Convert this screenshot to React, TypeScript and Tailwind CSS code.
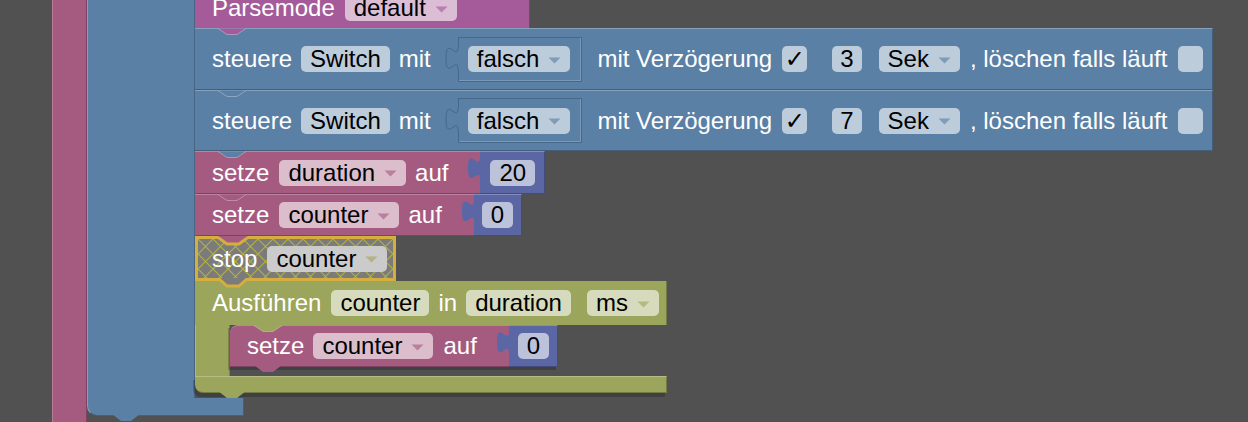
import React from "react";

const BLUE = "#5b80a5";
const PINK = "#a55b80";
const PURPLE = "#a55b99";
const NUM = "#5b67a5";
const GREEN = "#9ba55b";
const OLIVE = "#a5a55b";

function Tri({ color }: { color: string }) {
  return (
    <svg width="13" height="7" viewBox="0 0 13 7" className="ml-[9px] mt-[2px] shrink-0">
      <path d="M0.5 0.5 H12.5 L6.5 6.5 Z" fill={color} fillOpacity={0.63} />
    </svg>
  );
}

function Field({
  children,
  tri,
  className = "",
  pad = "px-[9px]",
  bg = "bg-white/60",
}: {
  children: React.ReactNode;
  tri?: string;
  className?: string;
  pad?: string;
  bg?: string;
}) {
  return (
    <span className={`flex h-[26px] shrink-0 items-center rounded-[5px] text-black ${bg} ${pad} ${className}`}>
      {children}
      {tri && <Tri color={tri} />}
    </span>
  );
}

function Check({ on, className = "" }: { on?: boolean; className?: string }) {
  return (
    <span
      className={`flex h-[26px] w-[25px] shrink-0 items-center justify-center rounded-[5px] bg-white/60 font-['DejaVu_Sans',sans-serif] text-[24px] font-bold text-black ${className}`}
    >
      {on ? "✓" : ""}
    </span>
  );
}

// notch at the top of a statement block, filled by the block above
function Notch({ fill, className }: { fill: string; className: string }) {
  return (
    <svg className={`absolute top-[-1px] ${className}`} width="28" height="8" viewBox="0 0 28 8">
      <path d="M0,0.5 L9,6.5 H19 L28,0.5 Z" fill={fill} />
      <path d="M0,0.5 L9,6.5 H19 L28,0.5" fill="none" stroke="rgba(255,255,255,0.3)" />
    </svg>
  );
}

// tab hanging under a block
function Tab({ fill, className }: { fill: string; className: string }) {
  return (
    <svg className={`absolute bottom-[-7px] z-10 ${className}`} width="28" height="8" viewBox="0 0 28 8">
      <path d="M0,0 L9,7 H19 L28,0 Z" fill={fill} />
    </svg>
  );
}

function OutTab({ fill }: { fill: string }) {
  return (
    <svg className="absolute left-[-12px] top-[5px]" width="13" height="24" viewBox="0 0 13 24">
      <path d="M13,0 H12 c0,15 -12,-12 -12,11.25 s12,-3.75 12,11.25 H13 Z" fill={fill} />
    </svg>
  );
}

function Num({ v, pad }: { v: string; pad: string }) {
  return (
    <div
      className={`relative flex items-center self-stretch border-y border-r border-t-white/25 border-b-black/25 border-r-black/25 bg-[#5b67a5] ${pad}`}
    >
      <OutTab fill={NUM} />
      <Field>{v}</Field>
    </div>
  );
}

function Slot() {
  return (
    <div className="relative ml-[27px] flex h-[45px] items-center border border-[#46688a] pl-[9px] pr-[11px] shadow-[inset_-1px_-1px_0_rgba(255,255,255,0.2)]">
      <svg className="absolute left-[-14px] top-[9px]" width="15" height="24" viewBox="0 0 15 24">
        <path d="M15,0 H13 c0,15 -12,-12 -12,11.25 s12,-3.75 12,11.25 H15 Z" fill={BLUE} />
        <path d="M13,0 c0,15 -12,-12 -12,11.25 s12,-3.75 12,11.25" fill="none" stroke="#46688a" />
      </svg>
      <Field tri={BLUE}>falsch</Field>
    </div>
  );
}

function Steuere({ n, prev, h }: { n: string; prev: string; h: string }) {
  return (
    <div
      className={`relative flex w-[1018px] items-center border-y border-r border-t-white/25 border-b-black/25 border-r-black/25 bg-[#5b80a5] pl-[17px] ${h}`}
    >
      <Notch fill={prev} className="left-[23px]" />
      <span>steuere</span>
      <Field className="ml-[9px]">Switch</Field>
      <span className="ml-[9px]">mit</span>
      <Slot />
      <span className="ml-[15px]">mit Verzögerung</span>
      <Check on className="ml-[10px]" />
      <Field className="ml-[25px]" pad="px-[8px]">
        {n}
      </Field>
      <Field className="ml-[17px]" tri={BLUE}>
        Sek
      </Field>
      <span className="ml-[10px]">, löschen falls läuft</span>
      <Check className="ml-[11px]" />
    </div>
  );
}

function Setze({
  name,
  v,
  prev,
  h,
  numPad,
}: {
  name: string;
  v: string;
  prev: string;
  h: string;
  numPad: string;
}) {
  return (
    <div className={`flex ${h}`}>
      <div className="relative flex items-center border-y border-t-white/25 border-b-black/25 bg-[#a55b80] pl-[17px] pr-[32px]">
        <Notch fill={prev} className="left-[23px]" />
        <span>setze</span>
        <Field className="ml-[10px]" tri={PINK}>
          {name}
        </Field>
        <span className="ml-[9px]">auf</span>
      </div>
      <Num v={v} pad={numPad} />
    </div>
  );
}

export default function App() {
  return (
    <div className="h-[422px] w-[1248px] overflow-hidden bg-[#515151] font-['Liberation_Sans',Arial,sans-serif] text-[24px] leading-none text-white">
      <div className="flex h-full pl-[52px]">
        <div className="h-full w-[35px] shrink-0 border-x border-l-white/20 border-r-black/25 bg-[#a55b80]" />

        <div className="flex shrink-0 flex-col">
          <div className="flex">
            <div className="w-[108px] shrink-0 border-x border-l-white/25 border-r-black/20 bg-[#5b80a5]" />

            <div className="flex flex-col items-start pb-[5px]">
              {/* Parsemode */}
              <div className="relative mt-[-14px] flex h-[42px] w-[335px] items-center border-r border-r-black/25 bg-[#a55b99] pl-[17px] pt-[2px]">
                <span>Parsemode</span>
                <Field className="ml-[10px]" tri={PURPLE}>
                  default
                </Field>
              </div>

              <Steuere n="3" prev={PURPLE} h="h-[62px]" />
              <Steuere n="7" prev={BLUE} h="h-[61px]" />

              <Setze name="duration" v="20" prev={BLUE} h="h-[43px]" numPad="pl-[10px] pr-[9px]" />
              <Setze name="counter" v="0" prev={PINK} h="h-[42px]" numPad="pl-[8px] pr-[8px]" />

              {/* stop counter (disabled, selected) */}
              <div className="relative flex h-[45px] w-[201px] items-center border-[3px] border-[#d4ae3e] pl-[14px]">
                <svg className="absolute inset-0 h-full w-full">
                  <defs>
                    <pattern id="dis" width="15" height="15" patternUnits="userSpaceOnUse">
                      <rect width="15" height="15" fill="#7b7b7b" />
                      <path d="M0 0L15 15M15 0L0 15" stroke="#b0b040" strokeWidth="1.2" />
                    </pattern>
                  </defs>
                  <rect width="100%" height="100%" fill="url(#dis)" />
                </svg>
                <svg className="absolute left-[20px] top-[-3px]" width="30" height="10" viewBox="0 0 30 10">
                  <path d="M0,0 H30 L21,8 H9 Z" fill={PINK} />
                  <path d="M0,1.5 L9,8 H21 L30,1.5" fill="none" stroke="#d4ae3e" strokeWidth="3" />
                </svg>
                <span className="relative">stop</span>
                <Field className="relative ml-[10px]" bg="bg-[#cbcbcb]" tri={OLIVE}>
                  counter
                </Field>
                <svg className="absolute bottom-[-10px] left-[20px] z-10" width="30" height="10" viewBox="0 0 30 10">
                  <path d="M0,0 H30 L21,8 H9 Z" fill="#7b7b7b" />
                  <path d="M0,0 L9,8 H21 L30,0" fill="none" stroke="#d4ae3e" strokeWidth="3" />
                </svg>
              </div>

              {/* Ausführen */}
              <div className="flex flex-col">
                <div className="relative flex h-[44px] w-[472px] items-center border-r border-r-black/25 bg-[#9ba55b] pl-[17px]">
                  <span>Ausführen</span>
                  <Field className="ml-[10px]">counter</Field>
                  <span className="ml-[9px]">in</span>
                  <Field className="ml-[9px]">duration</Field>
                  <Field className="ml-[16px]" tri={OLIVE}>
                    ms
                  </Field>
                </div>
                <div className="flex h-[51px]">
                  <div className="w-[35px] shrink-0 border-x border-l-white/20 border-r-black/20 bg-[#9ba55b]" />
                  <div className="flex h-[42px] shadow-[-2px_3px_0_rgba(0,0,0,0.2)]">
                    <div className="relative flex items-center rounded-tl-[8px] border-y border-t-white/25 border-b-black/25 bg-[#a55b80] pl-[17px] pr-[32px]">
                      <Notch fill={GREEN} className="left-[24px]" />
                      <span>setze</span>
                      <Field className="ml-[9px]" tri={PINK}>
                        counter
                      </Field>
                      <span className="ml-[10px]">auf</span>
                      <Tab fill={PINK} className="left-[24px]" />
                    </div>
                    <Num v="0" pad="pl-[9px] pr-[8px]" />
                  </div>
                </div>
                <div className="relative h-[17px] w-[472px] rounded-bl-[8px] border-y border-r border-t-white/25 border-b-black/25 border-r-black/25 bg-[#9ba55b] shadow-[-2px_4px_0_rgba(0,0,0,0.2)]">
                  <Tab fill={GREEN} className="left-[23px]" />
                </div>
              </div>
            </div>
          </div>

          <div className="relative h-[18px] w-[157px] rounded-bl-[10px] border-b border-l border-r border-b-black/25 border-l-white/25 border-r-black/25 bg-[#5b80a5]">
            <Tab fill={BLUE} className="left-[24px]" />
          </div>
        </div>
      </div>
    </div>
  );
}
